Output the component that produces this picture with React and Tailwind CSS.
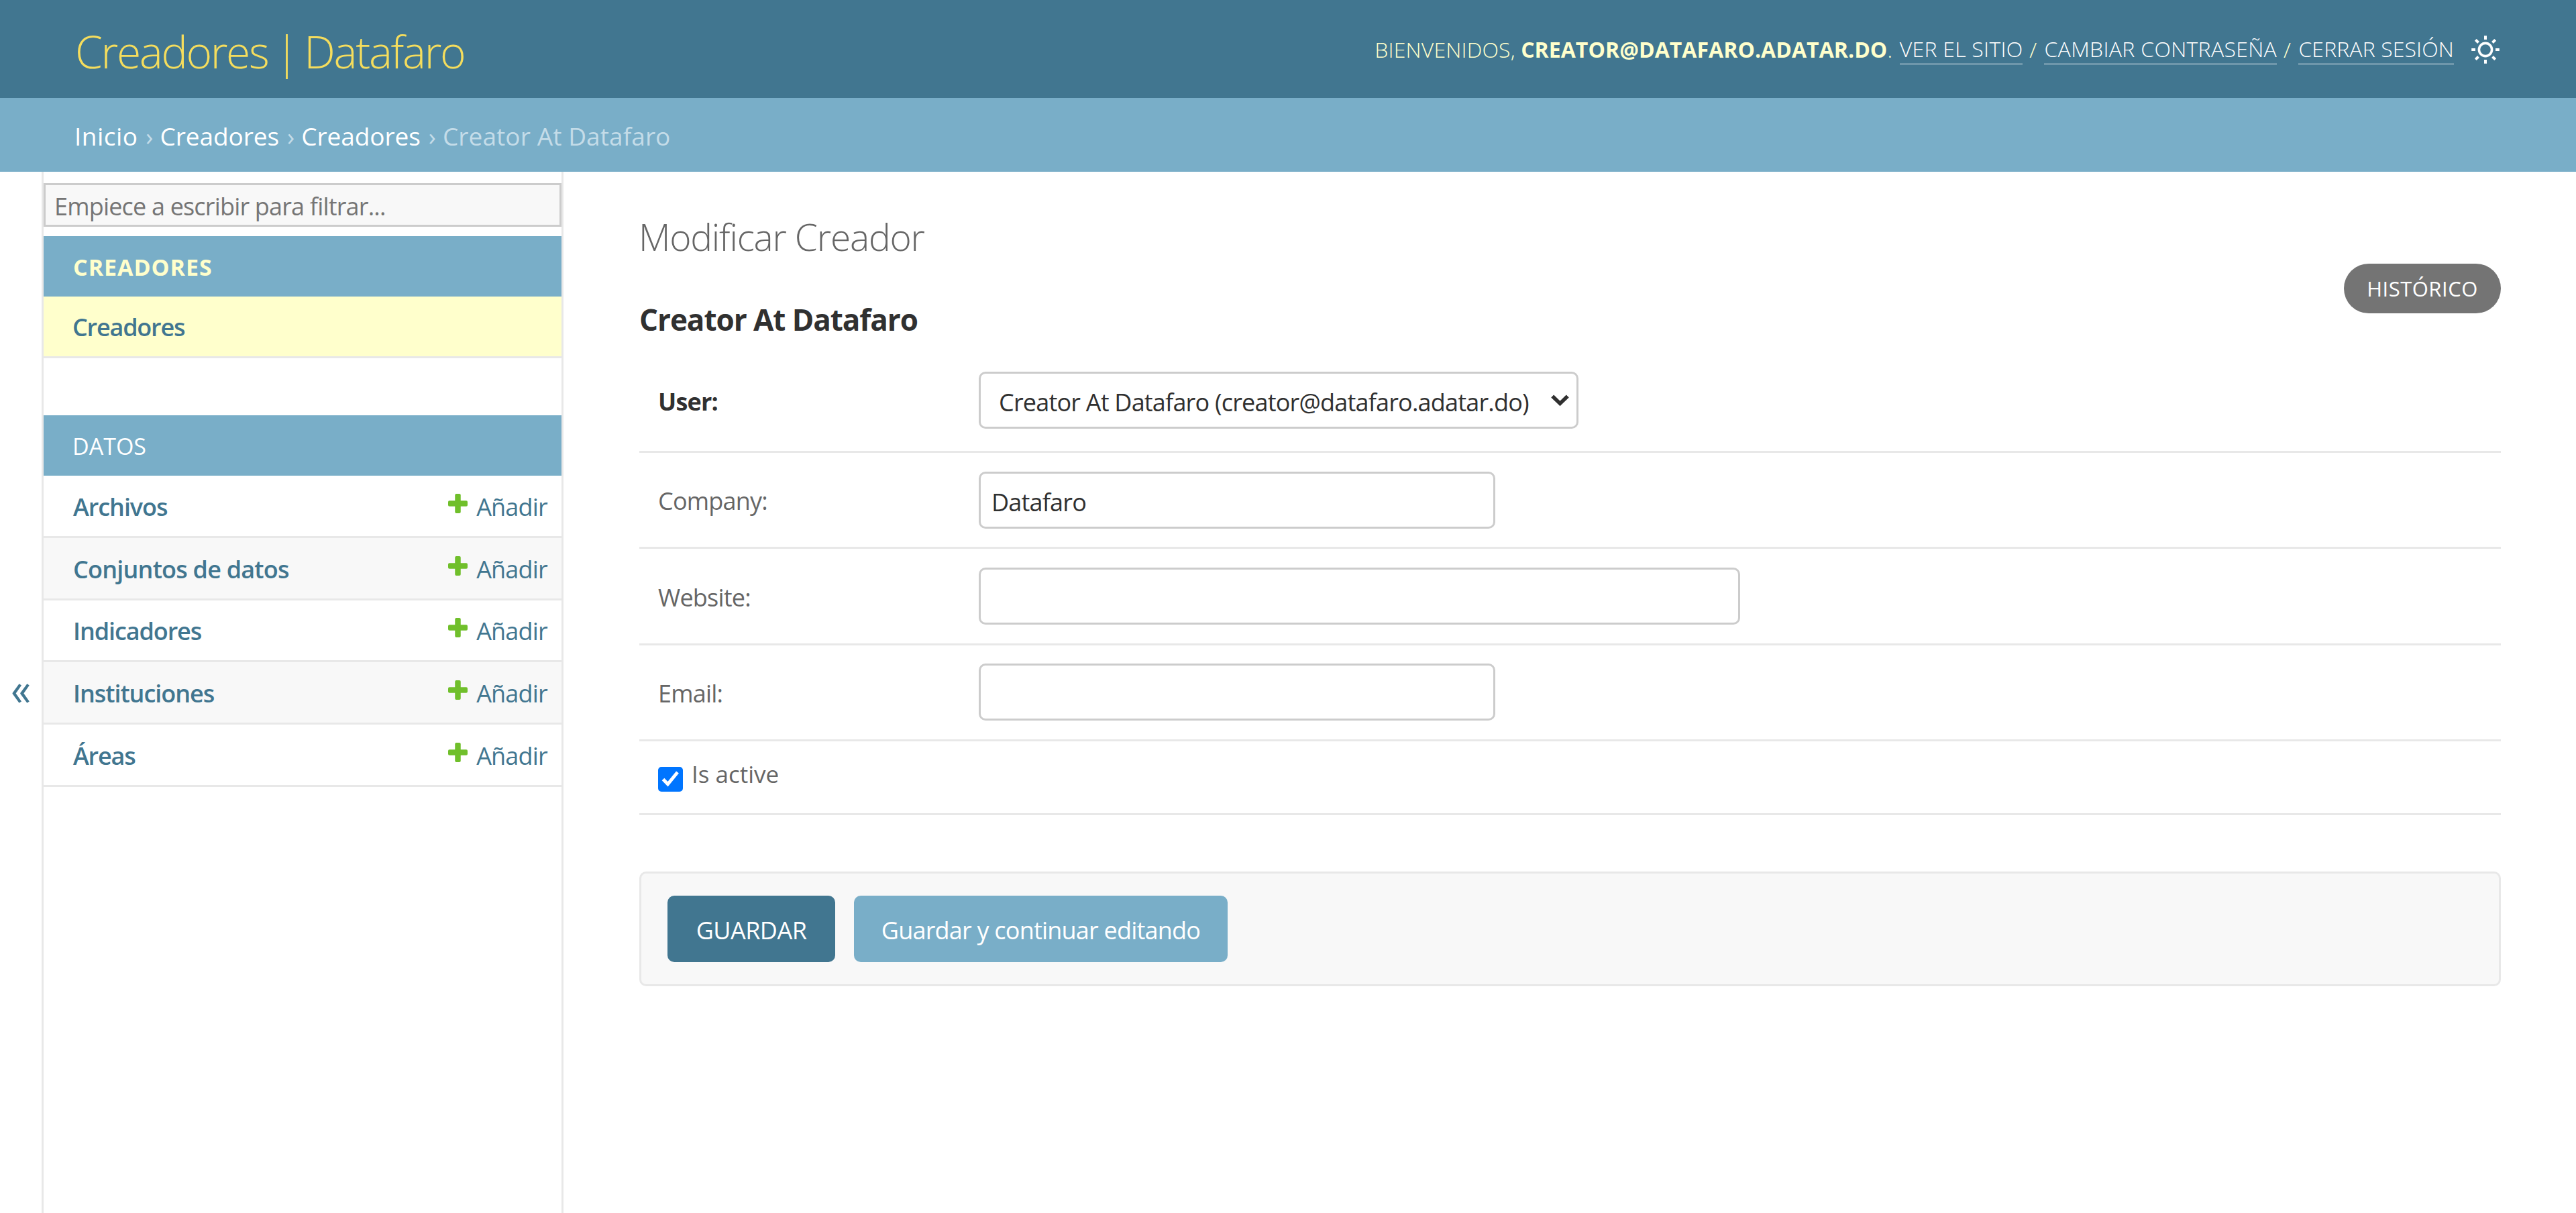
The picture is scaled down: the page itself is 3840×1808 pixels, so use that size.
import React, { useState } from "react";

const sections = [
  { label: "Archivos", track: "tracking-[-1.05px]" },
  { label: "Conjuntos de datos", track: "tracking-[-0.8px]" },
  { label: "Indicadores", track: "tracking-[-1.1px]" },
  { label: "Instituciones", track: "tracking-[-1.05px]" },
  { label: "Áreas", track: "tracking-[-1.2px]" },
];

const SunIcon = () => (
  <svg viewBox="0 0 42 42" className="w-[42px] h-[42px]" fill="none" stroke="currentColor" strokeWidth="4">
    <circle cx="21" cy="21" r="9.6" strokeWidth="3.6" />
    <path d="M21 0.2v5.8M21 36v5.8M0.2 21h5.8M36 21h5.8M6.3 6.3l4.2 4.2M31.5 31.5l4.2 4.2M6.3 35.7l4.2-4.2M31.5 10.5l4.2-4.2" />
  </svg>
);

const PlusIcon = () => (
  <svg viewBox="0 0 29 29" className="w-[29px] h-[29px] mb-[11px]" fill="#70bf2b">
    <rect x="10.25" y="0" width="8.5" height="29" rx="2" />
    <rect x="0" y="10.25" width="29" height="8.5" rx="2" />
  </svg>
);

const Header = () => (
  <header className="h-[146px] flex items-center justify-between pl-[112px] pr-[114px] bg-[#417690]">
    <h1 className="pt-[6px] text-[66px] leading-[80px] font-light tracking-[-2.35px] [word-spacing:-4.5px] text-[#f5dd5d]">
      Creadores | Datafaro
    </h1>
    <div className="flex items-center pt-px text-[32px] leading-[43px] font-light text-[#ffffcc] whitespace-pre">
      <span className="tracking-[0.15px]">BIENVENIDOS, </span>
      <strong className="font-bold tracking-[0.05px]">CREATOR@DATAFARO.ADATAR.DO</strong>
      <span className="tracking-[1.2px]">. </span>
      <a className="tracking-[0.25px] text-white border-b-3 border-[#6f97ab]">VER EL SITIO</a>
      <span className="tracking-[1.5px]"> / </span>
      <a className="tracking-[0.3px] text-white border-b-3 border-[#6f97ab]">CAMBIAR CONTRASEÑA</a>
      <span className="tracking-[1.6px]"> / </span>
      <a className="tracking-[0.1px] text-white border-b-3 border-[#6f97ab]">CERRAR SESIÓN</a>
      <button type="button" className="ml-[26px] text-white"><SunIcon /></button>
    </div>
  </header>
);

const Separator = () => <span className="w-[33px] pl-[2px] text-center">›</span>;

const Breadcrumbs = () => (
  <nav className="h-[110px] flex items-center pt-[3px] pl-[111px] bg-[#79aec8] text-[37px] leading-[50px] text-[#c4dce8]">
    <a className="tracking-[0.45px] text-white">Inicio</a>
    <Separator />
    <a className="tracking-[-0.05px] text-white">Creadores</a>
    <Separator />
    <a className="tracking-[-0.05px] text-white">Creadores</a>
    <Separator />
    <span className="tracking-[0.1px]">Creator At Datafaro</span>
  </nav>
);

const Sidebar = () => (
  <aside className="w-[778px] border-l-3 border-r-3 border-[#e8e8e8] pt-[17px]">
    <input
      type="text"
      placeholder="Empiece a escribir para filtrar..."
      className="block w-full h-[65px] pt-[4px] pl-[13px] border-[3px] border-[#ccc] bg-[#f8f8f8] text-[36px] tracking-[-0.82px] placeholder-[#757575] outline-none"
    />

    {/* Creadores */}
    <div className="mt-[14px] h-[90px] flex items-center pt-[2px] pl-[44px] bg-[#79aec8] text-[34px] font-bold tracking-[0.96px] text-[#ffffcc]">
      CREADORES
    </div>
    <div className="h-[92px] flex items-center pt-[3px] pl-[43px] bg-[#ffffcc] border-b-3 border-[#e8e8e8] text-[36px] font-semibold tracking-[-1.21px] text-[#417690]">
      Creadores
    </div>

    {/* Datos */}
    <div className="mt-[85px] h-[90px] flex items-center pt-[3px] pl-[43px] bg-[#79aec8] text-[34px] text-white">
      DATOS
    </div>
    <div>
      {sections.map((s) => (
        <div
          key={s.label}
          className="h-[92.75px] flex items-center justify-between pt-[4px] pl-[44px] pr-[21px] border-b-3 border-[#e8e8e8] odd:bg-white even:bg-[#f8f8f8] text-[36px] text-[#417690]"
        >
          <a className={`font-semibold ${s.track}`}>{s.label}</a>
          <a className="flex items-center gap-[13px] tracking-[-0.8px]">
            <PlusIcon />
            <span>Añadir</span>
          </a>
        </div>
      ))}
    </div>
  </aside>
);

const inputClass =
  "block h-[85px] pt-[7px] border-[3px] border-[#ccc] rounded-[10px] bg-white text-[36px] tracking-[-0.8px] text-[#303030] outline-none";

const Field = ({ label, children }) => (
  <div className="h-[143.4px] flex items-center pl-[28px] border-b-3 border-[#e8e8e8]">
    <label className="w-[478px] pt-[4px] text-[36px] tracking-[-0.8px] text-[#666]">{label}</label>
    {children}
  </div>
);

export default function App() {
  const [company, setCompany] = useState("Datafaro");
  const [active, setActive] = useState(true);

  return (
    <div className="h-screen flex flex-col overflow-hidden bg-white font-['Open_Sans',sans-serif]">
      <Header />
      <Breadcrumbs />

      <div className="flex-1 flex">
        <button type="button" className="w-[62px] flex items-center justify-center pb-[13px] text-[60px] leading-[60px] text-[#417690]">
          <span className="scale-y-115">«</span>
        </button>
        <Sidebar />

        <main className="flex-1 pl-[113px] pr-[112px] pt-[67px]">
          <div className="flex justify-between">
            <div>
              <h1 className="text-[55px] leading-[60px] font-light tracking-[-1.2px] text-[#666] -ml-px">Modificar Creador</h1>
              <h2 className="mt-[68px] text-[44px] leading-[50px] font-bold tracking-[-1.05px] text-[#303030]">Creator At Datafaro</h2>
            </div>
            <a className="mt-[70px] w-[234px] h-[74px] flex items-center justify-center rounded-full bg-[#747474] text-[31px] tracking-[0.5px] text-white">
              HISTÓRICO
            </a>
          </div>

          {/* Form rows */}
          <div className="mt-[53px] h-[121px] flex items-start pl-[28px] border-b-3 border-[#e8e8e8]">
            <label className="w-[478px] pt-[20px] text-[36px] leading-[50px] font-bold tracking-[-0.8px] text-[#303030]">User:</label>
            <div className="relative">
              <select className={`${inputClass} w-[894px] pl-[27px] appearance-none`}>
                <option>Creator At Datafaro (creator@datafaro.adatar.do)</option>
              </select>
              <svg viewBox="0 0 27 18" className="absolute right-[14px] top-[34px] w-[27px] h-[18px]" fill="none" stroke="#303030" strokeWidth="5.6">
                <path d="M2.2 2.4L13.5 13.4L24.8 2.4" />
              </svg>
            </div>
          </div>
          <Field label="Company:">
            <input className={`${inputClass} w-[770px] pl-[16px]`} value={company} onChange={(e) => setCompany(e.target.value)} />
          </Field>
          <Field label="Website:">
            <input className={`${inputClass} w-[1135px] pl-[16px]`} />
          </Field>
          <Field label="Email:">
            <input className={`${inputClass} w-[770px] pl-[16px]`} />
          </Field>
          <div className="h-[110px] flex items-start gap-[13px] pl-[28px] border-b-3 border-[#e8e8e8]">
            <button
              type="button"
              onClick={() => setActive(!active)}
              className="mt-[38px] w-[37px] h-[37px] rounded-[5px] bg-[#0075ff]"
            >
              {active && (
                <svg viewBox="0 0 37 37" className="w-full h-full" fill="none" stroke="white" strokeWidth="5">
                  <path d="M7.5 18.5L14.5 25.8L29 8" />
                </svg>
              )}
            </button>
            <label className="mt-[24px] text-[35px] leading-[50px] text-[#666]">Is active</label>
          </div>

          {/* Submit row */}
          <div className="mt-[84px] h-[171px] flex items-center gap-[28px] pl-[39px] border-[3px] border-[#e8e8e8] rounded-[10px] bg-[#f8f8f8] text-[36px] text-white">
            <button type="button" className="w-[250px] h-[99px] pt-[5px] rounded-[10px] bg-[#417690] tracking-[-0.56px]">
              GUARDAR
            </button>
            <button type="button" className="w-[557px] h-[99px] pt-[5px] rounded-[10px] bg-[#79aec8] tracking-[-0.79px]">
              Guardar y continuar editando
            </button>
          </div>
        </main>
      </div>
    </div>
  );
}
